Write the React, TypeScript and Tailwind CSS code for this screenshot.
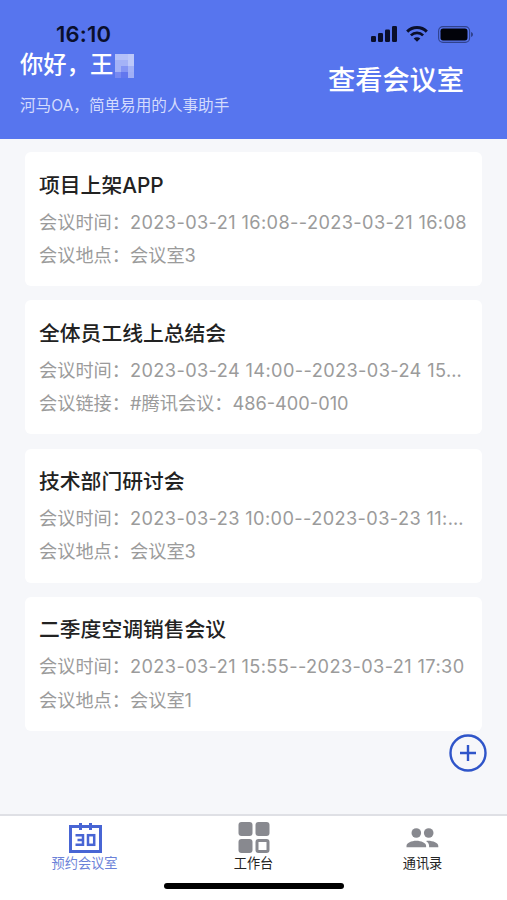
import { Fragment } from 'react';

interface Meeting {
  title: string;
  rows: { label: string; value: string; isTime?: boolean }[];
}

const meetings: Meeting[] = [
  {
    title: '项目上架APP',
    rows: [
      { label: '会议时间：', value: '2023-03-21 16:08--2023-03-21 16:08', isTime: true },
      { label: '会议地点：', value: '会议室3' },
    ],
  },
  {
    title: '全体员工线上总结会',
    rows: [
      { label: '会议时间：', value: '2023-03-24 14:00--2023-03-24 15…', isTime: true },
      { label: '会议链接：', value: '#腾讯会议：486-400-010' },
    ],
  },
  {
    title: '技术部门研讨会',
    rows: [
      { label: '会议时间：', value: '2023-03-23 10:00--2023-03-23 11:…', isTime: true },
      { label: '会议地点：', value: '会议室3' },
    ],
  },
  {
    title: '二季度空调销售会议',
    rows: [
      { label: '会议时间：', value: '2023-03-21 15:55--2023-03-21 17:30', isTime: true },
      { label: '会议地点：', value: '会议室1' },
    ],
  },
];

function StatusBar() {
  return (
    <div className="flex h-[24px] items-center justify-between pl-[56px] pr-[33px] text-[#0a0f2b]">
      <span className="text-[22px] font-semibold leading-[24px] tracking-[0.2px]">16:10</span>
      <div className="flex items-center">
        <svg width="27" height="16" viewBox="0 0 27 16" fill="currentColor">
          <rect x="0" y="10" width="5" height="6" rx="1.3" />
          <rect x="7" y="7" width="5" height="9" rx="1.3" />
          <rect x="14" y="3.5" width="5" height="12.5" rx="1.3" />
          <rect x="21" y="0" width="5" height="16" rx="1.3" />
        </svg>
        <svg className="ml-[8px]" width="22" height="16" viewBox="0 0 22 16" fill="none" stroke="currentColor">
          <path d="M1.2 5.6a14 14 0 0 1 19.6 0" strokeWidth="3" />
          <path d="M4.9 9.4a8.7 8.7 0 0 1 12.2 0" strokeWidth="2.7" />
          <path d="M11 15.8 7.7 12.5a4.7 4.7 0 0 1 6.6 0Z" fill="currentColor" stroke="none" />
        </svg>
        <svg className="ml-[10px]" width="36" height="17" viewBox="0 0 36 17">
          <rect x="0.6" y="0.6" width="31" height="15.8" rx="4.4" fill="none" stroke="currentColor" strokeOpacity="0.5" strokeWidth="1.1" />
          <rect x="2.5" y="2.6" width="27" height="11.8" rx="2.6" fill="#02030a" />
          <path d="M33 6v5c1.4-.5 2-1.4 2-2.5s-.6-2-2-2.5Z" fill="currentColor" fillOpacity="0.5" />
        </svg>
      </div>
    </div>
  );
}

// pixelated block that hides the end of the user name
function NameMosaic() {
  return (
    <svg className="ml-[2px] mt-px" width="19" height="24" viewBox="0 0 19 24" shapeRendering="crispEdges">
      <rect width="19" height="24" fill="#a4b2f7" />
      <rect x="0" y="0" width="13" height="6" fill="#b4c0f9" />
      <rect x="13" y="0" width="6" height="12" fill="#bdc8fa" />
      <rect x="6" y="12" width="7" height="6" fill="#8495f4" />
      <rect x="0" y="18" width="6" height="6" fill="#7789f1" />
      <rect x="6" y="18" width="7" height="6" fill="#6277ee" />
      <rect x="13" y="18" width="6" height="6" fill="#a1aff6" />
    </svg>
  );
}

function Header() {
  return (
    <header className="h-[139px] bg-[#5775ee] pt-[22px]">
      <StatusBar />
      <div className="flex justify-between pl-[20px] pr-[43px] text-white">
        <div className="pt-[4px]">
          <div className="flex h-[30px] items-center">
            <span className="whitespace-nowrap text-[23.3px] font-medium leading-[30px]">你好，王</span>
            <NameMosaic />
          </div>
          <p className="mt-[14px] whitespace-nowrap text-[15.6px] leading-[24px] text-[#d3dbfd]">
            河马OA，简单易用的人事助手
          </p>
        </div>
        <h1 className="whitespace-nowrap pt-[16px] text-[27.2px] font-medium leading-[38px]">查看会议室</h1>
      </div>
    </header>
  );
}

function MeetingCard({ meeting }: { meeting: Meeting }) {
  return (
    <article className="h-[134px] rounded-[6px] bg-white pl-[14px] pr-[12px] pt-[18.5px]">
      <h2 className="mb-[5px] text-[20.8px] font-medium leading-[30px] text-[#222222]">{meeting.title}</h2>
      <dl className="grid grid-cols-[91px_1fr] text-[18.2px] leading-[33.2px] text-[#9b9b9b]">
        {meeting.rows.map((row) => (
          <Fragment key={row.label}>
            <dt className="whitespace-nowrap">{row.label}</dt>
            <dd className={row.isTime ? 'whitespace-nowrap tracking-[0.38px]' : 'whitespace-nowrap'}>{row.value}</dd>
          </Fragment>
        ))}
      </dl>
    </article>
  );
}

function CalendarIcon() {
  return (
    <svg width="34" height="32" viewBox="0 0 34 32" fill="none" stroke="#4865d4">
      <rect x="2.5" y="4.5" width="30" height="25" strokeWidth="3" />
      <path d="M12.500 1v7M22.500 1v7" strokeWidth="3" />
      <path d="M7.500 13.200h7.500v9.600H7.500M9.500 18h5.500" strokeWidth="2.500" />
      <rect x="20" y="13.200" width="6.200" height="9.600" strokeWidth="2.500" />
    </svg>
  );
}

function WorkbenchIcon() {
  return (
    <svg width="32" height="32" viewBox="0 0 32 32" fill="#88898f">
      <rect x="0.5" y="0" width="14" height="14" rx="3" />
      <rect x="17.5" y="0" width="14" height="14" rx="3" />
      <rect x="0.5" y="17" width="14" height="14" rx="3" />
      <rect x="19" y="18.5" width="11" height="11" rx="1.5" fill="#fff" stroke="#88898f" strokeWidth="3" />
    </svg>
  );
}

function ContactsIcon() {
  return (
    <svg width="33" height="20" viewBox="0 0 33 20" fill="#88898f">
      <circle cx="10.3" cy="5" r="4.8" />
      <circle cx="22.7" cy="5" r="4.8" />
      <path d="M0.5 19.2v-1.5c0-2.7 5-5 9.8-5s9.8 2.3 9.8 5v1.5Z" />
      <path d="M20 12.9c5.7-.7 12.3 1.7 12.3 5v1.3h-9.2v-1.5c0-2-1.3-3.6-3.1-4.8Z" />
    </svg>
  );
}

function TabBar() {
  return (
    <nav className="h-[86px] border-t-2 border-[#dfe0e5] bg-white">
      <div className="grid h-[67px] grid-cols-3 pt-[6px] text-[13.2px] leading-[18px] text-[#242424]">
        <button className="flex flex-col items-center text-[#6b82d8]">
          <span className="flex h-[32px] items-center"><CalendarIcon /></span>
          <span>预约会议室</span>
        </button>
        <button className="flex flex-col items-center">
          <span className="flex h-[32px] items-center"><WorkbenchIcon /></span>
          <span>工作台</span>
        </button>
        <button className="flex flex-col items-center">
          <span className="flex h-[32px] items-center"><ContactsIcon /></span>
          <span>通讯录</span>
        </button>
      </div>
      <div className="mx-auto h-[6px] w-[180px] rounded-full bg-black" />
    </nav>
  );
}

export default function App() {
  return (
    <div className="flex h-[900px] w-[507px] flex-col overflow-hidden bg-[#f6f7fa] font-['Inter','Noto_Sans_CJK_SC',sans-serif]">
      <Header />
      <main className="flex-1 pl-[25px] pr-[25px] pt-[13px]">
        <div className="flex flex-col gap-[14.3px]">
          {meetings.map((meeting) => (
            <MeetingCard key={meeting.title} meeting={meeting} />
          ))}
        </div>
        <div className="-mr-[5px] mt-[3px] flex justify-end">
          <button aria-label="新增会议">
            <svg width="38" height="38" viewBox="0 0 38 38" fill="none" stroke="#2f55c9" strokeWidth="2.4">
              <circle cx="19" cy="19" r="17.5" />
              <path d="M19 11v16M11 19h16" />
            </svg>
          </button>
        </div>
      </main>
      <TabBar />
    </div>
  );
}
